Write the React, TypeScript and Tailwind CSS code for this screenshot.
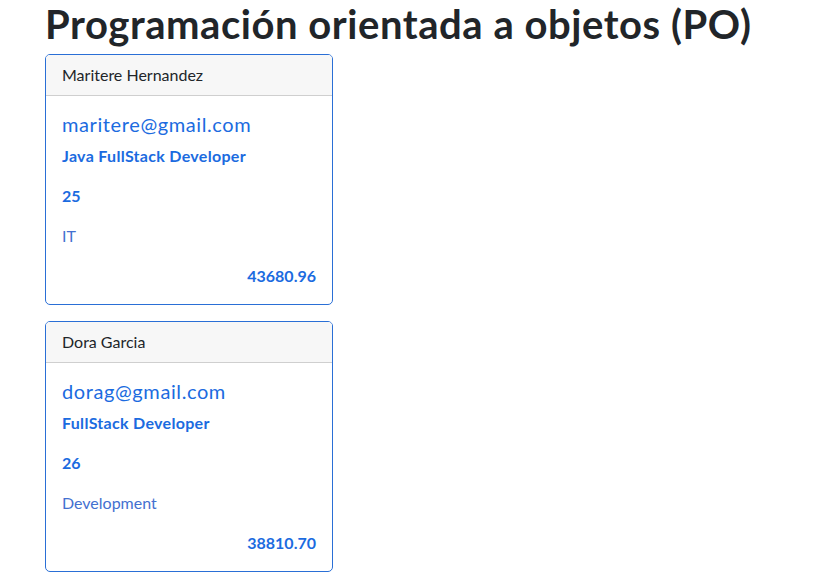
import React from "react";

type Person = {
	name: string;
	email: string;
	role: string;
	age: number;
	area: string;
	salary: string;
};

const people: Person[] = [
	{
		name: "Maritere Hernandez",
		email: "maritere@gmail.com",
		role: "Java FullStack Developer",
		age: 25,
		area: "IT",
		salary: "43680.96",
	},
	{
		name: "Dora Garcia",
		email: "dorag@gmail.com",
		role: "FullStack Developer",
		age: 26,
		area: "Development",
		salary: "38810.70",
	},
];

const PersonCard = ({ p }: { p: Person }) => {
	return (
		<div className="w-[288px] rounded-[5px] border border-[#2a6fd6] overflow-hidden bg-white">
			<div className="bg-[#f7f7f7] border-b border-[#cfcfcf] px-4 py-2 leading-6 text-[16px] text-[#212529]">
				{p.name}
			</div>
			<div className="p-4 text-[#1b6be0]">
				<h5 className="text-[20px] leading-6 mb-2 tracking-[0.6px]">{p.email}</h5>
				<p className="font-bold leading-6 mb-4 tracking-[0.3px]">{p.role}</p>
				<p className="font-bold leading-6 mb-4">{p.age}</p>
				<p className="leading-6 mb-4 text-[#4370d0]">{p.area}</p>
				<p className="font-bold leading-6 text-right">{p.salary}</p>
			</div>
		</div>
	);
};

export default function App() {
	return (
		<div
			className="h-[580px] overflow-hidden bg-white px-[45px] text-[#212529]"
			style={{ fontFamily: 'Lato, "Noto Sans", sans-serif' }}
		>
			<h1 className="text-[40px] leading-[48px] font-bold mb-[6px] whitespace-nowrap tracking-[0.55px]">
				Programación orientada a objetos (PO)
			</h1>
			<div className="flex flex-col gap-4">
				{people.map((p) => (
					<PersonCard key={p.email} p={p} />
				))}
			</div>
		</div>
	);
}
